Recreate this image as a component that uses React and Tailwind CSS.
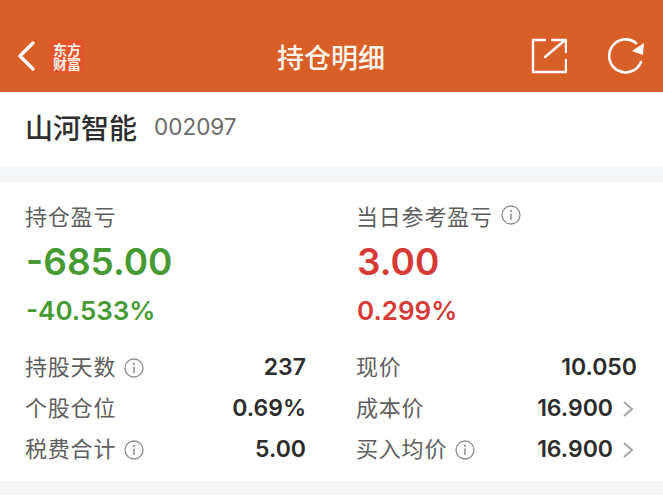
const CJK = { fontFamily: '"Noto Sans CJK SC", sans-serif' };
const NUM = { fontFamily: '"Inter", "Liberation Sans", sans-serif' };

function Info() {
  return (
    <svg width="20" height="20" viewBox="0 0 20 20" fill="none" stroke="#8c8c8c" className="shrink-0">
      <circle cx="10" cy="10" r="9" strokeWidth="1.3" />
      <circle cx="10" cy="5.8" r="1.1" fill="#8c8c8c" stroke="none" />
      <path d="M10 8.6v6.4" strokeWidth="1.5" />
    </svg>
  );
}

function Chevron() {
  return (
    <svg width="13" height="18" viewBox="0 0 13 18" fill="none" stroke="#a6a6a6" strokeWidth="2" className="mr-[2px] shrink-0">
      <path d="M2 2l8 7-8 7" />
    </svg>
  );
}

function Row({ label, value, info, chevron }) {
  return (
    <div className="flex h-[41px] items-center justify-between">
      <div className="flex items-center gap-[8px]">
        <span className="ml-[-1px] mt-[-5px] text-[22px] leading-none tracking-[0.8px] text-[#5e5e5e]" style={CJK}>{label}</span>
        {info && <Info />}
      </div>
      <div className="flex items-center gap-[9px]">
        <span className="text-[23px] font-semibold leading-none text-[#2c2c2c]" style={NUM}>{value}</span>
        {chevron && <Chevron />}
      </div>
    </div>
  );
}

export default function App() {
  return (
    <div className="flex h-[500px] w-[663px] flex-col overflow-hidden bg-white">
      <header className="grid h-[92px] grid-cols-3 items-center bg-[#d85f27] pr-[18px] pl-[17px] pt-[20px] text-white">
        <div className="flex items-center gap-[14px]">
          <svg width="19" height="32" viewBox="0 0 19 32" fill="none" stroke="#fff" strokeWidth="3.4" strokeLinecap="round" strokeLinejoin="round">
            <path d="M16 3L3 16l13 13" />
          </svg>
          <div className="flex h-[33px] w-[34px] items-center justify-center bg-[#e5532b]">
            <div className="w-[28px] break-all text-center text-[14px] font-bold leading-[14px] text-[#fff3ea]" style={CJK}>东方财富</div>
          </div>
        </div>
        <div className="whitespace-nowrap text-center text-[27px] font-medium leading-none text-[#fff5ec]" style={CJK}>持仓明细</div>
        <div className="flex items-center justify-end gap-[41px]">
          <svg width="36" height="36" viewBox="0 0 36 36" fill="none" stroke="#fff" strokeWidth="2.4" strokeLinecap="round" strokeLinejoin="round">
            <path d="M14 2H2v32h33V22" />
            <path d="M14 19L33 3" />
            <path d="M21 2h14v12" />
          </svg>
          <svg width="37" height="36" viewBox="0 0 37 36" fill="none" stroke="#fff" strokeWidth="2.6" strokeLinecap="round">
            <path d="M33 24A16.5 16.5 0 1 1 28 5" />
            <path d="M36 5L35 17 24 13Z" fill="#fff" stroke="none" />
          </svg>
        </div>
      </header>

      <section className="flex h-[74px] items-center gap-[17px] px-[26px] pb-[4px]">
        <span className="ml-[-1px] text-[28px] font-medium leading-none text-[#2e2e2e]" style={CJK}>山河智能</span>
        <span className="text-[22.5px] leading-none text-[#6a6a6a]" style={NUM}>002097</span>
      </section>

      <div className="h-[16px] bg-[#f5f6f8]" />

      <section className="flex flex-col px-[26px]">
        <div className="flex pt-[19px]">
          <div className="w-[331px]">
            <div className="ml-[-1px] h-[28px] text-[22px] leading-[28px] tracking-[0.8px] text-[#5e5e5e]" style={CJK}>持仓盈亏</div>
            <div className="mt-[10px] text-[37px] font-semibold leading-[46px] text-[#479a33]" style={NUM}>-685.00</div>
            <div className="mt-[11px] text-[26px] font-semibold leading-[30px] text-[#479a33]" style={NUM}>-40.533%</div>
          </div>
          <div className="flex-1">
            <div className="flex h-[28px] items-center gap-[8px]">
              <span className="ml-[-1px] text-[22px] leading-[28px] tracking-[0.8px] text-[#5e5e5e]" style={CJK}>当日参考盈亏</span>
              <Info />
            </div>
            <div className="mt-[10px] text-[37px] font-semibold leading-[46px] text-[#d63a37]" style={NUM}>3.00</div>
            <div className="mt-[11px] text-[26px] font-semibold leading-[30px] text-[#d63a37]" style={NUM}>0.299%</div>
          </div>
        </div>

        <div className="mt-[21px] flex">
          <div className="mr-[51px] w-[280px]">
            <Row label="持股天数" value="237" info />
            <Row label="个股仓位" value="0.69%" />
            <Row label="税费合计" value="5.00" info />
          </div>
          <div className="flex-1">
            <Row label="现价" value="10.050" />
            <Row label="成本价" value="16.900" chevron />
            <Row label="买入均价" value="16.900" info chevron />
          </div>
        </div>
      </section>

      <div className="mt-[11px] h-[14px] bg-[#f5f6f8]" />
      <div className="flex-1" />
    </div>
  );
}
